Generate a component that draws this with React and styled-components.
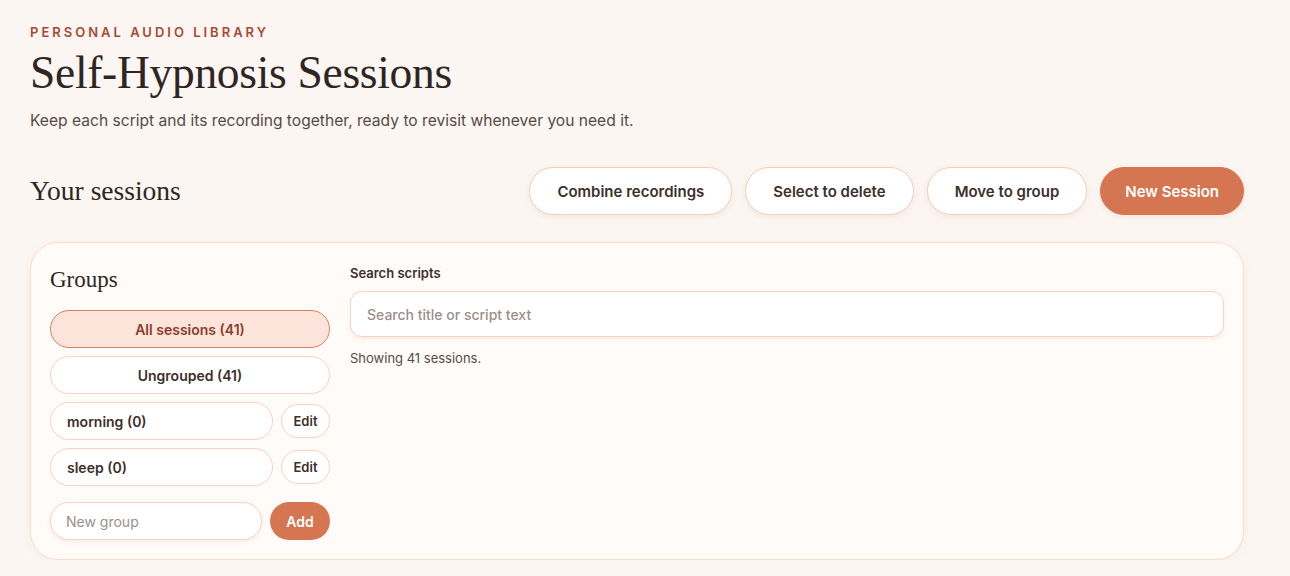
import React from "react";
import styled, { createGlobalStyle } from "styled-components";

const Global = createGlobalStyle`
  html, body { margin: 0; padding: 0; background: #fbf6f1; }
  body { font-family: "Inter", "Noto Sans", sans-serif; color: #3d2f2a; }
  * { box-sizing: border-box; }
`;

const Page = styled.div`
  width: 1214px;
  margin-left: 30px;
  padding-top: 23px;
`;

const Eyebrow = styled.div`
  font-size: 13px;
  font-weight: 600;
  letter-spacing: 3px;
  color: #a84a35;
  line-height: 18px;
`;

const Title = styled.h1`
  margin: 4px 0 0;
  font-family: "Liberation Serif", serif;
  font-weight: 400;
  font-size: 45.5px;
  line-height: 56px;
  color: #2f2522;
  letter-spacing: -0.3px;
`;

const Subtitle = styled.p`
  margin: 9px 0 0;
  font-size: 15.6px;
  line-height: 22px;
  color: #5a4a44;
`;

const Toolbar = styled.div`
  margin-top: 35px;
  display: flex;
  align-items: center;
  justify-content: space-between;
`;

const SectionTitle = styled.h2`
  margin: 0;
  font-family: "Liberation Serif", serif;
  font-weight: 400;
  font-size: 27.5px;
  color: #2f2522;
`;

const Actions = styled.div`
  display: flex;
  gap: 13px;
`;

const PillButton = styled.button`
  height: 48px;
  padding: 0 ${p => (p.$primary ? 24 : 27)}px;
  border-radius: 999px;
  font-family: inherit;
  font-size: 15px;
  font-weight: 600;
  cursor: pointer;
  border: 1.5px solid ${p => (p.$primary ? "#d67552" : "#f6cdbb")};
  background: ${p => (p.$primary ? "#d67552" : "#ffffff")};
  color: ${p => (p.$primary ? "#ffffff" : "#3d2f2a")};
  box-shadow: 0 2px 6px rgba(200, 120, 90, 0.12);
`;

const Card = styled.div`
  margin-top: 27px;
  background: #fffbf9;
  border: 1.5px solid #f8ddd0;
  border-radius: 28px;
  padding: 20px 19px 19px;
  display: grid;
  grid-template-columns: 280px 1fr;
  gap: 20px;
  box-shadow: 0 2px 8px rgba(200, 120, 90, 0.08);
`;

const Sidebar = styled.div`
  display: flex;
  flex-direction: column;
  gap: 8px;
`;

const GroupsTitle = styled.h3`
  margin: 2px 0 7px;
  font-family: "Liberation Serif", serif;
  font-weight: 400;
  font-size: 23px;
  line-height: 30px;
  color: #2f2522;
`;

const GroupPill = styled.button`
  flex: 1;
  height: 38px;
  border-radius: 999px;
  font-family: inherit;
  font-size: 14px;
  font-weight: 600;
  cursor: pointer;
  text-align: ${p => (p.$left ? "left" : "center")};
  padding: 0 16px;
  border: 1.5px solid ${p => (p.$active ? "#d9805f" : "#f8d2c2")};
  background: ${p => (p.$active ? "#fde4da" : "#ffffff")};
  color: ${p => (p.$active ? "#8a3d2b" : "#3d2f2a")};
`;

const GroupRow = styled.div`
  display: flex;
  align-items: center;
  gap: 8px;
`;

const EditButton = styled.button`
  width: 49px;
  height: 34px;
  border-radius: 999px;
  font-family: inherit;
  font-size: 13px;
  font-weight: 600;
  border: 1.5px solid #f8d2c2;
  background: #ffffff;
  color: #3d2f2a;
  cursor: pointer;
`;

const AddRow = styled.div`
  display: flex;
  align-items: center;
  gap: 8px;
  margin-top: 8px;
`;

const GroupInput = styled.input`
  flex: 1;
  min-width: 0;
  height: 38px;
  border-radius: 999px;
  border: 1.5px solid #f8d2c2;
  background: #ffffff;
  padding: 0 15px;
  font-family: inherit;
  font-size: 14px;
  color: #3d2f2a;
  box-shadow: 0 2px 4px rgba(200, 120, 90, 0.12);
  &::placeholder { color: #9a8f8b; }
`;

const AddButton = styled.button`
  width: 60px;
  height: 38px;
  border-radius: 999px;
  border: none;
  background: #d67552;
  color: #fff;
  font-family: inherit;
  font-size: 14px;
  font-weight: 600;
  cursor: pointer;
`;

const Main = styled.div`
  display: flex;
  flex-direction: column;
`;

const Label = styled.label`
  font-size: 13px;
  font-weight: 600;
  color: #3d2f2a;
  line-height: 18px;
  margin-top: 1px;
`;

const SearchInput = styled.input`
  margin-top: 9px;
  height: 46px;
  border-radius: 12px;
  border: 1.5px solid #f8d2c2;
  background: #ffffff;
  padding: 0 16px;
  font-family: inherit;
  font-size: 14px;
  color: #3d2f2a;
  box-shadow: 0 2px 4px rgba(200, 120, 90, 0.12);
  &::placeholder { color: #9a8f8b; font-weight: 500; }
`;

const Status = styled.div`
  margin-top: 13px;
  font-size: 13px;
  color: #5a4a44;
`;

export default function App() {
  return (
    <>
      <Global />
      <Page>
        <Eyebrow>PERSONAL AUDIO LIBRARY</Eyebrow>
        <Title>Self-Hypnosis Sessions</Title>
        <Subtitle>Keep each script and its recording together, ready to revisit whenever you need it.</Subtitle>
        <Toolbar>
          <SectionTitle>Your sessions</SectionTitle>
          <Actions>
            <PillButton>Combine recordings</PillButton>
            <PillButton>Select to delete</PillButton>
            <PillButton>Move to group</PillButton>
            <PillButton $primary>New Session</PillButton>
          </Actions>
        </Toolbar>
        <Card>
          <Sidebar>
            <GroupsTitle>Groups</GroupsTitle>
            <GroupRow><GroupPill $active>All sessions (41)</GroupPill></GroupRow>
            <GroupRow><GroupPill>Ungrouped (41)</GroupPill></GroupRow>
            <GroupRow>
              <GroupPill $left>morning (0)</GroupPill>
              <EditButton>Edit</EditButton>
            </GroupRow>
            <GroupRow>
              <GroupPill $left>sleep (0)</GroupPill>
              <EditButton>Edit</EditButton>
            </GroupRow>
            <AddRow>
              <GroupInput placeholder="New group" />
              <AddButton>Add</AddButton>
            </AddRow>
          </Sidebar>
          <Main>
            <Label>Search scripts</Label>
            <SearchInput placeholder="Search title or script text" />
            <Status>Showing 41 sessions.</Status>
          </Main>
        </Card>
      </Page>
    </>
  );
}
